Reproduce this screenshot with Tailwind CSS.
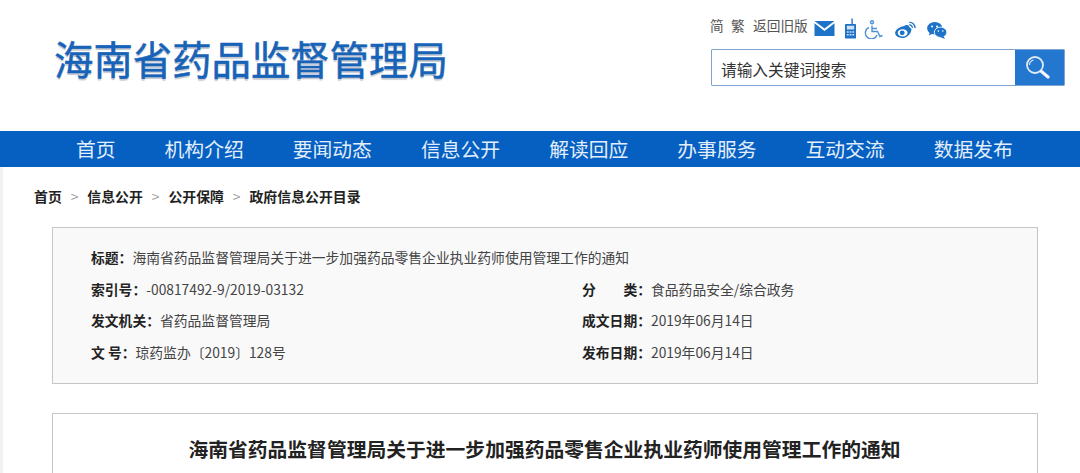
<!DOCTYPE html>
<html lang="zh-CN">
<head>
  <meta charset="UTF-8">
  <meta name="viewport" content="width=device-width, initial-scale=1.0">
  <title>海南省药品监督管理局</title>
  <script src="https://cdn.jsdelivr.net/npm/@tailwindcss/browser@4"></script>
</head>
<body class="bg-white h-[473px] overflow-hidden font-['Noto_Sans_CJK_SC','Liberation_Sans',sans-serif] text-[#333]">

  <!-- header -->
  <header class="h-[131px] flex justify-between pl-[54px] pr-[15px]">
    <div class="pt-[33px] text-[39.4px] leading-[50px] font-normal text-[#1763b8] [-webkit-text-stroke:0.5px_#1763b8] [text-shadow:0_2px_1px_#c4c8d0]">海南省药品监督管理局</div>
    <div class="w-[354px] pt-[16px]">
      <div class="flex h-[24px] items-center text-[13.7px] text-[#555]">
        <span class="w-[21px] -ml-[1px] -mt-[6px]">简</span>
        <span class="w-[22px] -mt-[6px]">繁</span>
        <span class="w-[61px] -mt-[6px] whitespace-nowrap">返回旧版</span>
        <svg class="w-[21px] h-[15px] mt-[1px]" viewBox="0 0 20 15"><path fill="#1e73c8" d="M0 0h20L10 7.500zM0 2.200l10 7.800 10-7.800V15H0z"/></svg>
        <svg class="w-[11px] h-[21px] ml-[10px] mt-[1px]" viewBox="0 0 12 22"><path fill="#1e73c8" d="M7 0h1.500v6H11a1 1 0 0 1 1 1v14a1 1 0 0 1-1 1H1a1 1 0 0 1-1-1V7a1 1 0 0 1 1-1h6z"/><path fill="#cfe2f5" d="M2 8h8v4H2zM2 14h2v1.500H2zM5 14h2v1.500H5zM8 14h2v1.500H8zM2 17h2v1.500H2zM5 17h2v1.500H5zM8 17h2v1.500H8z"/></svg>
        <svg class="w-[19px] h-[19px] ml-[8px] mt-[2px]" viewBox="0 0 19 19" fill="none" stroke="#4d92d6" stroke-width="1.400"><circle cx="8" cy="2.200" r="1.500"/><path d="M8 5.500v6h5.500l2.500 5 2.500-1M8 8.500h5M4.800 7.500a6 6 0 1 0 8.200 7.500"/></svg>
        <svg class="w-[23px] h-[18px] ml-[11px] mt-[4px]" viewBox="0 0 22 19"><path fill="#1e73c8" d="M9 5.500C12 3.500 15 4 15 6.500c1.800.5 2.500 1.800 2.200 3.200C16.500 14 12 18 7.500 18 3.500 18 0 15.500 0 12.500c0-2.500 4-6.500 9-7z"/><ellipse cx="8" cy="12.500" rx="5.200" ry="3.800" fill="#fff"/><circle cx="7.500" cy="12.500" r="2.600" fill="#1e73c8"/><path fill="none" stroke="#1e73c8" stroke-width="1.400" d="M15 1.500a5.500 5.500 0 0 1 6 6M15 4.200a2.800 2.800 0 0 1 3.200 3"/></svg>
        <svg class="w-[22px] h-[17px] ml-[9px] mt-[4px]" viewBox="0 0 22 19"><ellipse cx="8.500" cy="7" rx="8.500" ry="7" fill="#1e73c8"/><path fill="#1e73c8" d="M3 11l-1 4 5-2.500z"/><ellipse cx="15" cy="11.500" rx="7" ry="5.800" fill="#1e73c8" stroke="#fff"/><path fill="#1e73c8" d="M18 15.500l2 3.500-5-2z"/><circle cx="5.500" cy="5" r="1.100" fill="#fff"/><circle cx="11" cy="5" r="1.100" fill="#fff"/><circle cx="12.500" cy="10" r=".9" fill="#fff"/><circle cx="17.500" cy="10" r=".9" fill="#fff"/></svg>
      </div>
      <div class="mt-[9px] flex h-[37px] border border-[#7fa6d2] bg-white rounded-[1px]">
        <div class="flex-1 pl-[9px] text-[15.700px] leading-[39px] text-[#333]">请输入关键词搜索</div>
        <div class="w-[49px] bg-[#2377cf] flex items-center justify-center">
          <svg class="w-[26px] h-[26px] mr-[6px] mb-[2px]" viewBox="0 0 26 26" fill="none"><circle cx="11" cy="11" r="8" stroke="#dfeaf6" stroke-width="1.800"/><path d="M5.500 11a5.500 5.500 0 0 1 4-5" stroke="#dfeaf6" stroke-width="1.200"/><path d="M17.500 17.500l6.500 5.500" stroke="#f2f6fb" stroke-width="3.200" stroke-linecap="round"/></svg>
        </div>
      </div>
    </div>
  </header>

  <!-- nav -->
  <nav class="h-[36px] bg-[#0560c2] flex gap-[49px] pl-[76px] text-[19.800px] leading-[36px] text-[#e3eefa] whitespace-nowrap">
    <a>首页</a>
    <a class="w-[79.200px]">机构介绍</a>
    <a class="w-[79.200px]">要闻动态</a>
    <a class="w-[79.200px]">信息公开</a>
    <a class="w-[79.200px]">解读回应</a>
    <a class="w-[79.200px]">办事服务</a>
    <a class="w-[79.200px]">互动交流</a>
    <a class="w-[79.200px]">数据发布</a>
  </nav>

  <main class="border-l-[3px] border-[#f1f1f1]">
    <!-- breadcrumb -->
    <div class="h-[60px] pl-[31px] pt-[19px] flex text-[13.900px] leading-[20px] font-bold text-[#222]">
      <span>首页</span>
      <span class="w-[25.500px] text-center font-normal text-[#999]">&gt;</span>
      <span>信息公开</span>
      <span class="w-[25.500px] text-center font-normal text-[#999]">&gt;</span>
      <span>公开保障</span>
      <span class="w-[25.500px] text-center font-normal text-[#999]">&gt;</span>
      <span>政府信息公开目录</span>
    </div>

    <!-- info box -->
    <section class="ml-[49px] w-[986px] h-[157px] border border-[#c6c6c8] bg-[#f9f9fa] pl-[38px] pt-[14px] text-[13.800px] leading-[31.600px] text-[#444]">
      <div><b class="text-[#222] font-bold">标题：</b>海南省药品监督管理局关于进一步加强药品零售企业执业药师使用管理工作的通知</div>
      <div class="grid grid-cols-[491px_1fr]">
        <div><b class="text-[#222] font-bold">索引号：</b>-00817492-9/2019-03132</div>
        <div class="flex"><b class="text-[#222] font-bold w-[69px] flex justify-between"><span>分</span><span>类：</span></b>食品药品安全/综合政务</div>
        <div><b class="text-[#222] font-bold">发文机关：</b>省药品监督管理局</div>
        <div><b class="text-[#222] font-bold">成文日期：</b>2019年06月14日</div>
        <div><b class="text-[#222] font-bold">文 号：</b>琼药监办〔2019〕128号</div>
        <div><b class="text-[#222] font-bold">发布日期：</b>2019年06月14日</div>
      </div>
    </section>

    <!-- article -->
    <section class="ml-[49px] mt-[29px] w-[986px] h-[80px] border border-[#c6c6c8] pt-[19px] pr-[1px] text-center text-[19.800px] leading-[32px] font-bold text-[#222]">
      海南省药品监督管理局关于进一步加强药品零售企业执业药师使用管理工作的通知
    </section>
  </main>
</body>
</html>
